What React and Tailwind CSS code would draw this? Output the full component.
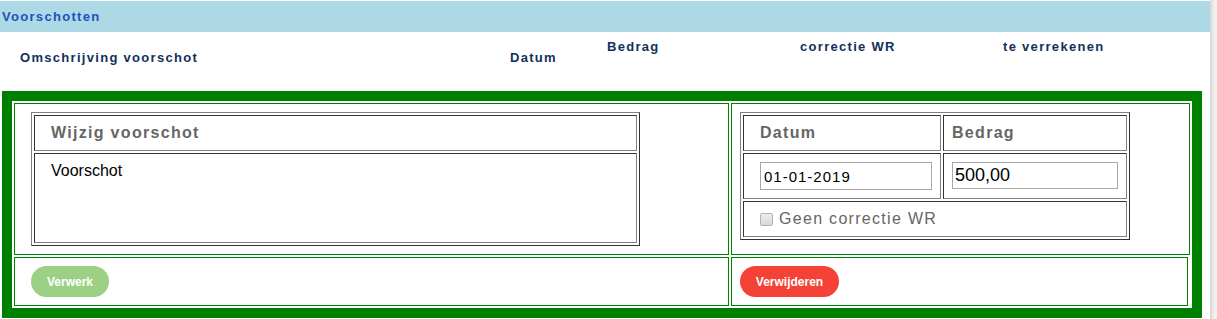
const cell = 'border-t border-l border-b border-r border-t-[#333] border-l-[#333] border-b-[#808080] border-r-[#808080]'
const outer = 'border-t border-l border-b border-r border-t-[#808080] border-l-[#808080] border-b-[#333] border-r-[#333]'

function Checkbox() {
  return (
    <span className="inline-block w-[13px] h-[13px] rounded-[2px] border border-[#b4b4b4] bg-gradient-to-b from-[#ececec] to-[#d9d9d9]" />
  )
}

export default function App() {
  return (
    <div className="flex w-[1217px] h-[319px] overflow-hidden bg-white font-['Liberation_Sans',Arial,sans-serif]">
      <div className="w-[1210px]">
        <div className="mt-[1px] h-[31px] bg-[#add8e6] flex items-center pl-[2px] text-[13px] font-bold tracking-[1.3px] text-[#1e50c0]">
          Voorschotten
        </div>

        <div className="h-[59px] flex text-[13px] leading-[15px] font-bold tracking-[1.3px] text-[#12305a]">
          <div className="w-[510px] pl-[20px] pt-[18px]">Omschrijving voorschot</div>
          <div className="w-[97px] pt-[18px]">Datum</div>
          <div className="w-[193px] pt-[7px]">Bedrag</div>
          <div className="w-[203px] pt-[7px]">correctie WR</div>
          <div className="pt-[7px]">te verrekenen</div>
        </div>

        <div className="ml-[2px] w-[1200px] h-[227px] border-[10px] border-[#008000] p-[2px] flex flex-col gap-[2px]">
          <div className="flex gap-[2px] h-[152px]">
            <div className="w-[715px] border border-[#008000] pt-[8px] pl-[16px]">
              <div className={`w-[609px] h-[134px] ${outer} p-[2px] flex flex-col gap-[2px]`}>
                <div className={`h-[36px] ${cell} pl-[16px] flex items-center text-[16px] font-bold tracking-[1.3px] text-[#666]`}>
                  Wijzig voorschot
                </div>
                <div className={`flex-1 ${cell} pl-[16px] pt-[5px] text-[16px] text-black`}>
                  Voorschot
                </div>
              </div>
            </div>

            <div className="flex-1 border border-[#008000] pt-[8px] pl-[8px]">
              <div className={`w-[390px] h-[128px] ${outer} p-[2px] grid grid-cols-[198px_184px] grid-rows-[36px_46px_36px] gap-[2px]`}>
                <div className={`${cell} pl-[16px] flex items-center text-[16px] font-bold tracking-[1.3px] text-[#666]`}>Datum</div>
                <div className={`${cell} pl-[8px] flex items-center text-[16px] font-bold tracking-[1.3px] text-[#666]`}>Bedrag</div>
                <div className={`${cell} pl-[16px] pt-[8px]`}>
                  <input
                    readOnly
                    value="01-01-2019"
                    className="w-[172px] h-[28px] border border-[#a9a9a9] px-[3px] text-[15px] tracking-[1px] text-black outline-none"
                  />
                </div>
                <div className={`${cell} pl-[8px] pt-[8px]`}>
                  <input
                    readOnly
                    value="500,00"
                    className="w-[166px] h-[27px] border border-[#a9a9a9] px-[2px] text-[18px] text-black outline-none"
                  />
                </div>
                <div className={`col-span-2 ${cell} pl-[16px] flex items-center gap-[6px] text-[16px] tracking-[1.3px] text-[#666]`}>
                  <Checkbox />
                  <span>Geen correctie WR</span>
                </div>
              </div>
            </div>
          </div>

          <div className="flex gap-[2px] h-[49px] mr-[2px]">
            <div className="w-[715px] border border-[#008000] pl-[16px] pt-[8px]">
              <button className="w-[78px] h-[31px] rounded-full bg-[#9cd185] text-white text-[12px] font-bold">
                Verwerk
              </button>
            </div>
            <div className="flex-1 border border-[#008000] pl-[8px] pt-[8px]">
              <button className="w-[99px] h-[31px] rounded-full bg-[#f44336] text-white text-[12px] font-bold">
                Verwijderen
              </button>
            </div>
          </div>
        </div>
      </div>
      <div className="flex-1 bg-gradient-to-r from-[#d6d6d6] via-[#ececec] to-[#f4f4f4]" />
    </div>
  )
}
